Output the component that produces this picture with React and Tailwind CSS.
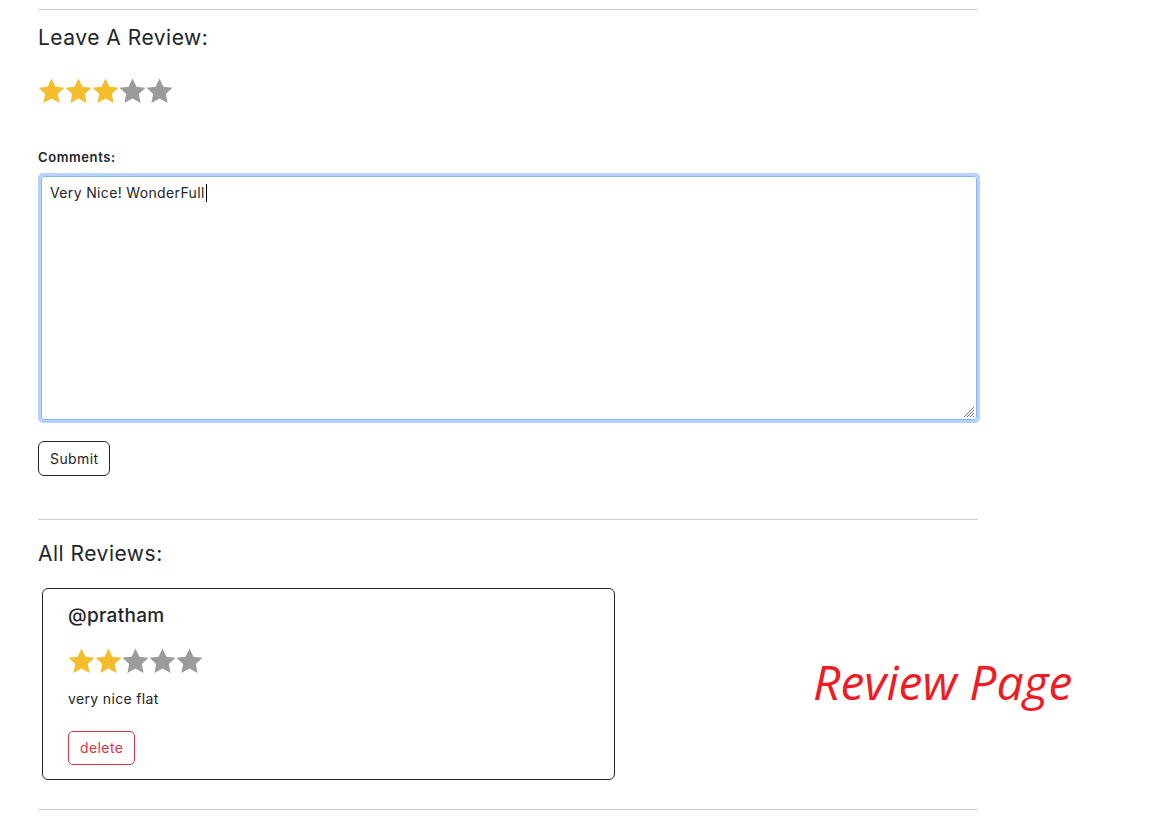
import React from "react";

const Star = ({ on }) => (
  <svg width="27" height="26" viewBox="0 0 27 26" className="block">
    <path
      d="M13.5 0.5l3.9 8.2 9.1 1.1-6.7 6.2 1.8 9-8.1-4.5-8.1 4.5 1.8-9L0.5 9.8l9.1-1.1z"
      fill={on ? "#f5bd2b" : "#9b9b9b"}
    />
  </svg>
);

const Stars = ({ n }) => (
  <div className="flex">
    {[1, 2, 3, 4, 5].map((i) => (
      <Star key={i} on={i <= n} />
    ))}
  </div>
);

export default function App() {
  return (
    <div
      className="relative min-h-[817px] bg-white text-[#212529]"
      style={{ fontFamily: "Inter, 'Open Sans', sans-serif" }}
    >
      <div className="w-[940px] ml-[38px] pt-[9px]">
        <hr className="border-0 border-t border-[#cfcfcf]" />
        <h4 className="mt-[14px] text-[21px] leading-[28px] font-normal tracking-[0.5px]">Leave A Review:</h4>
        <div className="mt-[26px]">
          <Stars n={3} />
        </div>
        <label className="block mt-[44px] text-[13px] font-semibold leading-[18px] tracking-[0.6px]">Comments:</label>
        <div className="mt-[7px] w-[942px] h-[250px] rounded-[5px] border-[3px] border-[#b6d2fb] bg-white relative">
          <div className="absolute inset-0 rounded-[3px] border border-[#86b7fe]" />
          <div className="pt-[6px] pl-[9px] text-[14px] leading-[22px] tracking-[0.35px] flex items-center">
            Very Nice! WonderFull<span className="inline-block w-px h-[18px] bg-black ml-px" />
          </div>
          <svg className="absolute right-[2px] bottom-[2px]" width="14" height="14" viewBox="0 0 14 14">
            <path d="M13 3L3 13M13 6L6 13M13 9L9 13M13 12L12 13" stroke="#777" strokeWidth="1" />
          </svg>
        </div>
        <button className="mt-[18px] h-[35px] px-[11px] rounded-[6px] border border-[#212529] text-[14px] tracking-[0.4px] leading-none bg-white">
          Submit
        </button>
        <hr className="mt-[43px] border-0 border-t border-[#cfcfcf]" />
        <h4 className="mt-[20px] text-[21px] leading-[28px] font-normal tracking-[0.5px]">All Reviews:</h4>
        <div className="mt-[20px] ml-[4px] w-[573px] h-[192px] rounded-[6px] border border-[#212529] pl-[25px] pt-[14px]">
          <div className="text-[19px] leading-[26px] font-medium tracking-[0.3px]">@pratham</div>
          <div className="mt-[19px]">
            <Stars n={2} />
          </div>
          <div className="mt-[14px] text-[14px] leading-[22px] tracking-[0.35px]">very nice flat</div>
          <button className="mt-[21px] h-[34px] px-[11px] rounded-[5px] border border-[#dc3545] text-[#dc3545] text-[14px] tracking-[0.4px] leading-none bg-white">
            delete
          </button>
        </div>
        <hr className="mt-[29px] border-0 border-t border-[#cfcfcf]" />
      </div>
      <div
        className="absolute left-[813px] top-[652px] text-[48px] italic text-[#ee1c25] leading-[60px]"
        style={{ fontFamily: "'Open Sans', sans-serif" }}
      >
        Review Page
      </div>
    </div>
  );
}
